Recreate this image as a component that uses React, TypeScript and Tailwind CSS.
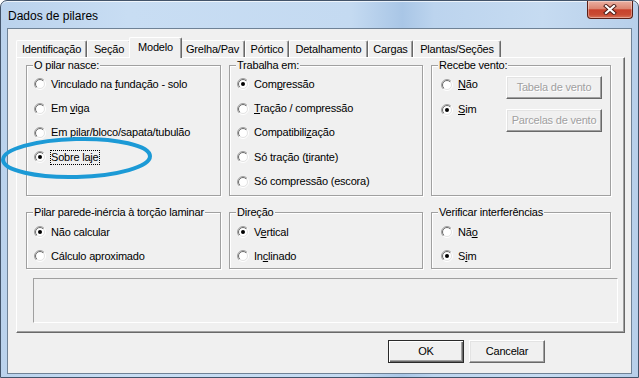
import { useId, type ReactNode } from 'react';

const Radio = ({ checked = false }: { checked?: boolean }) => {
  const id = useId().replace(/[^a-zA-Z0-9]/g, '');
  return (
    <svg width="12" height="12" viewBox="0 0 12 12" className="shrink-0">
      <defs>
        <linearGradient id={`${id}o`} x1="0" y1="0" x2="1" y2="1">
          <stop offset="0.5" stopColor="#a0a0a0" />
          <stop offset="0.5" stopColor="#ffffff" />
        </linearGradient>
        <linearGradient id={`${id}i`} x1="0" y1="0" x2="1" y2="1">
          <stop offset="0.5" stopColor="#696969" />
          <stop offset="0.5" stopColor="#e3e3e3" />
        </linearGradient>
      </defs>
      <circle cx="6" cy="6" r="5.5" fill="none" stroke={`url(#${id}o)`} />
      <circle cx="6" cy="6" r="4.5" fill="#fff" stroke={`url(#${id}i)`} />
      {checked && <circle cx="6" cy="6" r="2" fill="#000" />}
    </svg>
  );
};

const Option = ({
  checked,
  focus,
  row,
  children,
}: {
  checked?: boolean;
  focus?: boolean;
  row: string;
  children: ReactNode;
}) => (
  <div className={`flex items-center ${row}`}>
    <Radio checked={checked} />
    <span
      className={`ml-[4px] border leading-[13px] ${
        focus ? 'border-dotted border-black' : 'border-transparent'
      }`}
    >
      {children}
    </span>
  </div>
);

const Group = ({
  title,
  className,
  children,
}: {
  title: string;
  className: string;
  children: ReactNode;
}) => (
  <div className={`relative pt-[6px] ${className}`}>
    <div className="h-full border border-[#a0a0a0] shadow-[inset_1px_1px_0_#fff,1px_1px_0_#fff]">
      {children}
    </div>
    <span className="absolute left-[7px] top-0 bg-[#f0f0f0] px-[1px] leading-[13px]">
      {title}
    </span>
  </div>
);

const btn3d =
  'flex items-center justify-center border border-t-white border-l-white border-r-[#696969] border-b-[#696969] shadow-[inset_-1px_-1px_0_#a0a0a0,inset_1px_1px_0_#e3e3e3] bg-[#f0f0f0]';

const tabs = [
  { label: 'Identificação', w: 'w-[71px]' },
  { label: 'Seção', w: 'w-[44px]' },
  { label: 'Modelo', w: 'w-[53px]', active: true },
  { label: 'Grelha/Pav', w: 'w-[65px]' },
  { label: 'Pórtico', w: 'w-[44px]' },
  { label: 'Detalhamento', w: 'w-[79px]' },
  { label: 'Cargas', w: 'w-[45px]' },
  { label: 'Plantas/Seções', w: 'w-[88px]' },
];

export default function App() {
  return (
    <div className="w-[639px] h-[378px] bg-white font-['Liberation_Sans',Arial,sans-serif] text-[11px] tracking-[-0.2px] text-black">
      <div className="relative flex h-[378px] w-[639px] flex-col rounded-t-[7px] border border-[#43546a] bg-[linear-gradient(90deg,#bad2ec_0%,#c8ddf3_20%,#c4daf1_55%,#a9c6e6_63%,#bcd4ee_68%,#c6dbf1_85%,#b7cfea_100%)] shadow-[inset_0_1px_0_rgba(255,255,255,0.7)]">
        {/* title bar */}
        <div className="flex h-[27px] items-center pl-[7px] pt-[2px] text-[12px] tracking-normal text-black">
          Dados de pilares
        </div>

        {/* close button */}
        <div className="absolute right-[5px] top-0 flex h-[18px] w-[46px] items-center justify-center rounded-b-[4px] border border-t-0 border-[#5a1f17] bg-[linear-gradient(180deg,#eab0a2_0%,#dc8672_45%,#c8412c_52%,#c94b33_80%,#d9735a_100%)] shadow-[inset_0_0_0_1px_rgba(255,255,255,0.35)]">
          <svg width="14" height="11" viewBox="0 0 14 11">
            <path d="M3 2 L11 9 M11 2 L3 9" stroke="#4a1a14" strokeWidth="4" strokeLinecap="square" />
            <path d="M3 2 L11 9 M11 2 L3 9" stroke="#ffffff" strokeWidth="2.2" strokeLinecap="square" />
          </svg>
        </div>

        {/* client area */}
        <div className="mx-[6px] mb-[3px] flex flex-1 flex-col border border-[#6f8296] bg-[#f0f0f0] pl-[8px] pt-[8px]">
          {/* tab strip */}
          <div className="flex h-[20px] items-end">
            {tabs.map((t) =>
              t.active ? (
                <div
                  key={t.label}
                  className={`relative z-10 -mx-[2px] -mb-px flex h-[21px] ${t.w} items-center justify-center rounded-t-[2px] border-l border-t border-r border-l-white border-t-white border-r-[#696969] bg-[#f0f0f0] pb-[2px] shadow-[inset_-1px_0_0_#a0a0a0]`}
                >
                  {t.label}
                </div>
              ) : (
                <div
                  key={t.label}
                  className={`flex h-[17px] ${t.w} items-center justify-center rounded-t-[2px] border-l border-t border-r border-l-white border-t-white border-r-[#696969] shadow-[inset_-1px_0_0_#a0a0a0]`}
                >
                  {t.label}
                </div>
              )
            )}
          </div>

          {/* tab panel */}
          <div className="h-[276px] w-[609px] border border-l-white border-t-white border-r-[#696969] border-b-[#696969] pl-[9px] pt-[1px] shadow-[inset_-1px_-1px_0_#a0a0a0]">
            <div className="flex gap-[8px]">
              <Group title="O pilar nasce:" className="h-[137px] w-[195px]">
                <div className="pl-[7px] pt-[6px]">
                  <Option row="h-[24.4px]">
                    Vinculado na <u>f</u>undação - solo
                  </Option>
                  <Option row="h-[24.4px]">
                    Em <u>v</u>iga
                  </Option>
                  <Option row="h-[24.4px]">
                    Em <u>p</u>ilar/bloco/sapata/tubulão
                  </Option>
                  <Option row="h-[24.4px]" checked focus>
                    Sobre laje
                  </Option>
                </div>
              </Group>
              <Group title="Trabalha em:" className="h-[137px] w-[194px]">
                <div className="pl-[7px] pt-[6px]">
                  <Option row="h-[24.4px]" checked>
                    Com<u>p</u>ressão
                  </Option>
                  <Option row="h-[24.4px]">
                    <u>T</u>ração / compressão
                  </Option>
                  <Option row="h-[24.4px]">
                    Compatibili<u>z</u>ação
                  </Option>
                  <Option row="h-[24.4px]">
                    Só tração (<u>t</u>irante)
                  </Option>
                  <Option row="h-[24.4px]">Só compressão (escora)</Option>
                </div>
              </Group>
              <Group title="Recebe vento:" className="h-[137px] w-[180px]">
                <div className="flex pl-[9px]">
                  <div className="w-[65px] pt-[6px]">
                    <Option row="h-[25px]">
                      <u>N</u>ão
                    </Option>
                    <Option row="h-[25px]" checked>
                      <u>S</u>im
                    </Option>
                  </div>
                  <div className="flex flex-col gap-[10px] pt-[10px]">
                    <div className={`${btn3d} h-[23px] w-[96px] text-[#a0a0a0] [text-shadow:1px_1px_0_#fff]`}>
                      Tabela de vento
                    </div>
                    <div className={`${btn3d} h-[23px] w-[96px] text-[#a0a0a0] [text-shadow:1px_1px_0_#fff]`}>
                      Parcelas de vento
                    </div>
                  </div>
                </div>
              </Group>
            </div>

            <div className="mt-[10px] flex gap-[8px]">
              <Group title="Pilar parede-inércia à torção laminar" className="h-[63px] w-[195px]">
                <div className="pl-[7px] pt-[7px]">
                  <Option row="h-[24px]" checked>
                    Não calcular
                  </Option>
                  <Option row="h-[24px]">Cálculo aproximado</Option>
                </div>
              </Group>
              <Group title="Direção" className="h-[63px] w-[194px]">
                <div className="pl-[7px] pt-[7px]">
                  <Option row="h-[24px]" checked>
                    V<u>e</u>rtical
                  </Option>
                  <Option row="h-[24px]">
                    In<u>c</u>linado
                  </Option>
                </div>
              </Group>
              <Group title="Verificar interferências" className="h-[63px] w-[180px]">
                <div className="pl-[9px] pt-[7px]">
                  <Option row="h-[24px]">
                    Nã<u>o</u>
                  </Option>
                  <Option row="h-[24px]" checked>
                    S<u>i</u>m
                  </Option>
                </div>
              </Group>
            </div>

            <div className="ml-[7px] mt-[9px] h-[45px] w-[585px] border border-l-[#a0a0a0] border-t-[#a0a0a0] border-r-white border-b-white" />
          </div>

          {/* dialog buttons */}
          <div className="mt-[7px] flex justify-end gap-[5px] pr-[86px]">
            <div className="flex h-[23px] w-[76px] items-center justify-center border border-[#2a2a2a] bg-[#f0f0f0] shadow-[inset_1px_1px_0_#fff,inset_-1px_-1px_0_#696969,inset_-2px_-2px_0_#a0a0a0]">
              OK
            </div>
            <div className={`${btn3d} h-[23px] w-[76px]`}>Cancelar</div>
          </div>
        </div>

        {/* blue hand-drawn annotation */}
        <svg
          className="pointer-events-none absolute left-0 top-[135px]"
          width="156"
          height="46"
          viewBox="0 0 156 46"
        >
          <ellipse
            cx="75.5"
            cy="22"
            rx="73.5"
            ry="19"
            fill="none"
            stroke="#1c9ad6"
            strokeWidth="4"
            transform="rotate(-1.5 75.5 22)"
          />
        </svg>
      </div>
    </div>
  );
}
